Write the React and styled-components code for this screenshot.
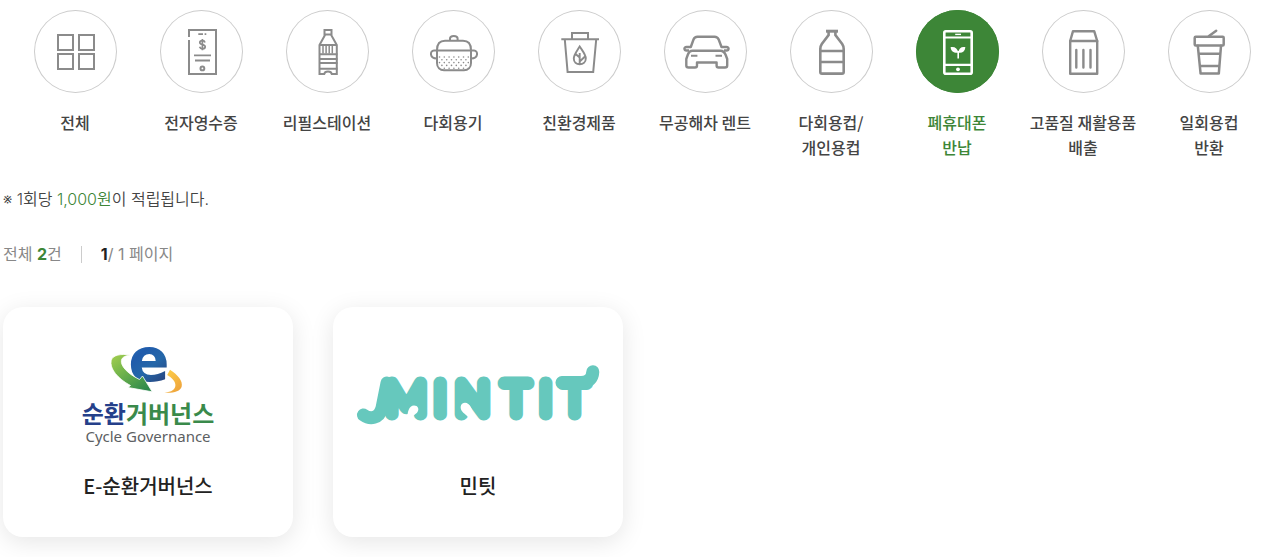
import React from "react";
import styled, { createGlobalStyle } from "styled-components";

const GREEN = "#3d8637";

const GlobalStyle = createGlobalStyle`
  *, *::before, *::after { box-sizing: border-box; }
  body {
    margin: 0;
    background: #fff;
    color: #444;
    font-family: "Noto Sans CJK KR", "Noto Sans", sans-serif;
    font-size: 16px;
    overflow-x: hidden;
  }
`;

const Page = styled.main`
  padding: 10px 0 20px;
`;

const CategoryList = styled.ul`
  display: grid;
  grid-template-columns: repeat(10, minmax(0, 1fr));
  margin: 0 -1px 0 0;
  padding: 0 0 0 12px;
  list-style: none;
`;

const CategoryLink = styled.a`
  display: flex;
  flex-direction: column;
  align-items: center;
  gap: 17px;
  color: ${({ $active }) => ($active ? GREEN : "#444")};
  font-weight: 500;
  line-height: 25px;
  text-align: center;
  text-decoration: none;
  white-space: pre-line;
`;

const IconCircle = styled.span`
  display: block;
  width: 83px;
  height: 83px;
  border-radius: 50%;
  box-shadow: inset 0 0 0 1px ${({ $active }) => ($active ? GREEN : "#ccc")};
  background: ${({ $active }) => ($active ? GREEN : "#fff")};
  color: ${({ $active }) => ($active ? "#fff" : "#8b8b8b")};
`;

const IconSvg = styled.svg`
  display: block;
  width: 83px;
  height: 83px;
  fill: none;
  stroke: currentColor;
  stroke-width: 2;
`;

const Content = styled.section`
  padding: 0 3px;
`;

const Notice = styled.p`
  margin: 27px 0 0;
  font-family: Inter, "Noto Sans CJK KR", sans-serif;
  font-weight: 350;
  line-height: 25px;

  em {
    color: ${GREEN};
    font-style: normal;
  }
`;

const Summary = styled.div`
  display: flex;
  align-items: center;
  gap: 19px;
  margin-top: 30px;
  color: #888;
  font-family: Inter, "Noto Sans CJK KR", sans-serif;
  line-height: 25px;
`;

const Divider = styled.span`
  width: 1px;
  height: 17px;
  background: #ccc;
`;

const Count = styled.strong`
  color: ${({ $dark }) => ($dark ? "#222" : GREEN)};
  font-weight: 700;
`;

const CardGrid = styled.ul`
  display: grid;
  grid-template-columns: repeat(auto-fill, 290px);
  gap: 40px;
  margin: 40px 0 0;
  padding: 0;
  list-style: none;
`;

const CardLink = styled.a`
  display: flex;
  flex-direction: column;
  align-items: center;
  padding: 12px 20px 36px;
  border-radius: 20px;
  background: #fff;
  box-shadow: 0 5px 25px rgba(0, 0, 0, 0.1);
  color: #222;
  text-decoration: none;
`;

const LogoArea = styled.span`
  display: flex;
  align-items: center;
  justify-content: center;
  height: 152px;
`;

const LogoSvg = styled.svg`
  display: block;
  overflow: visible;
`;

const CardTitle = styled.span`
  font-size: 20px;
  font-weight: 500;
  line-height: 30px;
`;

const GridIcon = () => (
  <>
    <rect x="24" y="25" width="15" height="15" />
    <rect x="45" y="25" width="15" height="15" />
    <rect x="24" y="44" width="15" height="15" />
    <rect x="45" y="44" width="15" height="15" />
  </>
);

const ReceiptIcon = () => (
  <>
    <path d="M29 27V20H56V64H29V30" />
    <path d="M38.3 24.2H43M44.6 24.2H46.3M34 45.3H51M35 50.5H50" strokeWidth="1.8" />
    <path d="M45 32.4C44.6 31 43.5 30.6 42.4 30.6C40.9 30.6 39.8 31.4 39.8 32.6C39.8 35.4 45.2 33.9 45.2 36.8C45.2 38.1 44 38.8 42.5 38.8C41 38.8 40 38 39.6 36.7M42.4 29V40.3" strokeWidth="1.7" />
    <circle cx="42.4" cy="58.4" r="1.9" />
  </>
);

const RefillIcon = () => (
  <>
    <path d="M38.5 20H45.5V24.5H38.5ZM39 25L33.5 35V64H38.2C38.8 60.6 45.2 60.6 45.8 64H50.8V35L45.2 25M33.5 35H51" />
    <path d="M37 35V43.5M40.1 35V43.5M43.2 35V43.5M46.3 35V43.5" strokeWidth="1.5" />
    <path d="M33 44.2H51.5M33 49H51.5M33 53H51.5M33 58.7H51.5" />
  </>
);

const POT_DOTS = [0, 1, 2, 3, 4].flatMap((row) =>
  Array.from({ length: row % 2 ? 6 : 7 }, (_, i) => [27.5 + i * 4.8 + (row % 2) * 2.4, 47 + row * 2.8])
);

const PotIcon = () => (
  <>
    <path d="M38 30V28.5C38 25 45.6 25 45.6 28.5V30" />
    <path d="M25 50V40C25 34 28 30.7 33 30.7H51C56 30.7 59 34 59 40V53C59 57.5 56 60.2 52 60.2H32C28 60.2 25 57.5 25 53V50M25 40.5H59" />
    <path d="M25 40.5H22C17.5 40.5 17.5 48.5 24.8 48.5M59 40.5H62C66.5 40.5 66.5 48.5 59.2 48.5" />
    {POT_DOTS.map(([x, y]) => (
      <circle key={`${x}-${y}`} cx={x} cy={y} r="0.8" fill="currentColor" stroke="none" />
    ))}
  </>
);

const EcoBinIcon = () => (
  <>
    <path d="M34 29V23H50V29M23.3 29.3H61M26.8 29.5L29.6 62H55.2L58.2 29.5" />
    <path d="M41.7 36.5C44.5 41 47.8 44.5 47.8 48.5C47.8 52.2 45 54.2 41.7 54.2C38.4 54.2 35.8 52.2 35.8 48.5C35.8 44.5 39 41 41.7 36.5ZM41.7 43V54M41.7 47.5L37.3 43.7M41.7 51.5L47 46.5" strokeWidth="1.9" />
  </>
);

const CarIcon = () => (
  <g strokeWidth="2.4" strokeLinejoin="round">
    <path d="M25 40.5H22.5C20 40.5 19.5 37 22.5 37H26.8L29.5 29.5Q30.5 26.7 33.5 26.7H50.5Q53.5 26.7 54.7 29.5L57.5 37H62.5C65.5 37 65 40.5 62.5 40.5H60" />
    <path d="M28.5 40.7H56.5Q60 40.7 61.7 45L63.2 49V55.5Q63.2 57.5 61 57.5H54.5Q52.6 57.5 52.6 55.5V52.5H33V55.5Q33 57.5 31 57.5H24.5Q22.3 57.5 22.3 55.5V49L23.7 45Q25.2 40.7 28.5 40.7Z" />
    <path d="M27 45.8H33.4M51.5 45.8H58" strokeWidth="2" />
  </g>
);

const TumblerIcon = () => (
  <g strokeWidth="2.6">
    <path d="M36 21.2H48" strokeWidth="3" />
    <path d="M38.6 22V25L31.8 34Q30.3 36.2 30.3 39V62Q30.3 63.6 32 63.6H52Q53.7 63.6 53.7 62V39Q53.7 36.2 52.2 34L45.4 25V22M30.3 41H53.7M30.3 52H53.7" />
  </g>
);

const PhoneIcon = () => (
  <>
    <g strokeWidth="2.6">
      <rect x="28.3" y="21.3" width="27.4" height="42.4" rx="1.5" />
      <path d="M28 27.5H56M28 54.8H56" strokeWidth="2.2" />
    </g>
    <path d="M39.2 24.4H45" strokeWidth="1.4" />
    <circle cx="42" cy="59.3" r="1.9" fill="currentColor" stroke="none" />
    <path d="M42.3 42.7C38.5 43.5 35 41.5 34.6 37.2C38.7 36.4 41.6 38.4 42.3 42.7ZM42.3 42.7C46 43.5 48.9 41.5 49.4 37.2C45.3 36.4 42.7 38.4 42.3 42.7Z" fill="currentColor" stroke="none" />
    <path d="M42.2 41V48.5" strokeWidth="1.6" />
  </>
);

const CartonIcon = () => (
  <g strokeWidth="2.4" strokeLinejoin="round" strokeLinecap="round">
    <path d="M31 21.2H52.2L55.2 31V63.7H28.2V31Z" />
    <path d="M28.2 31H55.2M34.3 40V57.6M41.4 40V57.6M48.5 40V57.6" />
  </g>
);

const CupIcon = () => (
  <g strokeWidth="2.5" strokeLinejoin="round" strokeLinecap="round">
    <rect x="26.7" y="26.8" width="29" height="8.6" rx="1" />
    <path d="M41 26L48.2 20.8M29.8 35.8L32.6 63.6H50.8L53 35.8M31 43.8H52.2M32 56H51.2" />
  </g>
);

const CycleLogo = () => (
  <LogoSvg width="140" height="100" viewBox="0 0 140 100" role="img" aria-label="순환거버넌스 Cycle Governance">
    <defs>
      <linearGradient id="leaf" x1="0" y1="0" x2="0.8" y2="1">
        <stop offset="0" stopColor="#a5cf4f" />
        <stop offset="0.4" stopColor="#75b64b" />
        <stop offset="1" stopColor="#2c884c" />
      </linearGradient>
      <linearGradient id="sun" x1="0" y1="0" x2="0.7" y2="1">
        <stop offset="0" stopColor="#ffd24a" />
        <stop offset="1" stopColor="#eea43c" />
      </linearGradient>
      <linearGradient id="ocean" x1="0" y1="0" x2="0.5" y2="1">
        <stop offset="0" stopColor="#2c8bc7" />
        <stop offset="0.45" stopColor="#205bab" />
        <stop offset="0.7" stopColor="#2467a9" />
        <stop offset="1" stopColor="#29457f" />
      </linearGradient>
    </defs>
    <path d="M92 24.7C100 30 105 36 103.7 41.5C102.5 46.5 95 48.3 86.5 47.7C93.5 47 97.5 44.5 97.4 40C97.3 36 93.5 32.5 89.2 30Z" fill="url(#sun)" />
    <text x="71" y="36" textAnchor="middle" fontFamily="DejaVu Sans, sans-serif" fontWeight="700" fontSize="61" fill="url(#ocean)">e</text>
    <path d="M52.5 10C43 8.5 34.5 10 33.2 15.5C31.5 23.5 39.5 33.5 52.5 40.5L50 42.5L74.2 46.8L64.5 31L61.5 34.5C49 28.5 42.5 20.5 43.4 15.5C44 12 47.5 10.7 52.5 10Z" fill="url(#leaf)" stroke="#fff" strokeWidth="0.8" />
    <text x="70" y="78" textAnchor="middle" fontFamily="Noto Sans CJK KR, sans-serif" fontWeight="700" fontSize="24" fill="#25408a">
      순환<tspan fill="#3a8a4b">거버넌스</tspan>
    </text>
    <text x="70" y="97" textAnchor="middle" fontFamily="Noto Sans, sans-serif" fontSize="15" fill="#5c6062">Cycle Governance</text>
  </LogoSvg>
);

const MintitLogo = () => (
  <LogoSvg width="244" height="60" viewBox="0 0 244 60" role="img" aria-label="MINTIT">
    <g fill="none" stroke="#66c8bd" strokeWidth="13" strokeLinecap="round" strokeLinejoin="round">
      <path d="M7.5 50C14 54.5 23 54 26 43L31 18" />
      <path d="M206 17.5H225C233 17.5 236.5 13 236.8 6.7" />
    </g>
    <text
      x="50 84 116.5 160 189.5 218.5"
      y="49"
      textAnchor="middle"
      fontFamily="Lato, sans-serif"
      fontWeight="100"
      fontSize="44"
      fill="#66c8bd"
      stroke="#66c8bd"
      strokeWidth="13"
      strokeLinejoin="round"
    >MINTIT</text>
    <path d="M51.3 56C51 47 53 40.5 58 40.5C62 40.5 63.5 44 61.5 47C60 49.5 54.5 51.5 53.8 56Z" fill="#fff" />
    <path d="M117 56C118 46 114 37.8 109 37.8C105 37.8 103.7 42 105.5 45.5C107 48.5 113 51 114.5 56Z" fill="#fff" />
  </LogoSvg>
);

const CATEGORIES = [
  { label: "전체", Icon: GridIcon },
  { label: "전자영수증", Icon: ReceiptIcon },
  { label: "리필스테이션", Icon: RefillIcon },
  { label: "다회용기", Icon: PotIcon },
  { label: "친환경제품", Icon: EcoBinIcon },
  { label: "무공해차 렌트", Icon: CarIcon },
  { label: "다회용컵/\n개인용컵", Icon: TumblerIcon },
  { label: "폐휴대폰\n반납", Icon: PhoneIcon, active: true },
  { label: "고품질 재활용품\n배출", Icon: CartonIcon },
  { label: "일회용컵\n반환", Icon: CupIcon },
];

const COMPANIES = [
  { name: "E-순환거버넌스", Logo: CycleLogo },
  { name: "민팃", Logo: MintitLogo },
];

export default function App() {
  return (
    <Page>
      <GlobalStyle />
      <nav>
        <CategoryList>
          {CATEGORIES.map(({ label, Icon, active }) => (
            <li key={label}>
              <CategoryLink href="#" $active={active} aria-current={active ? "page" : undefined}>
                <IconCircle $active={active}>
                  <IconSvg viewBox="0 0 83 83" aria-hidden="true">
                    <Icon />
                  </IconSvg>
                </IconCircle>
                <span>{label}</span>
              </CategoryLink>
            </li>
          ))}
        </CategoryList>
      </nav>
      <Content>
        <Notice>
          ※ 1회당 <em>1,000원</em>이 적립됩니다.
        </Notice>
        <Summary>
          <span>
            전체 <Count>2</Count>건
          </span>
          <Divider />
          <span>
            <Count $dark>1</Count>/ 1 페이지
          </span>
        </Summary>
        <CardGrid>
          {COMPANIES.map(({ name, Logo }) => (
            <li key={name}>
              <CardLink href="#">
                <LogoArea>
                  <Logo />
                </LogoArea>
                <CardTitle>{name}</CardTitle>
              </CardLink>
            </li>
          ))}
        </CardGrid>
      </Content>
    </Page>
  );
}
